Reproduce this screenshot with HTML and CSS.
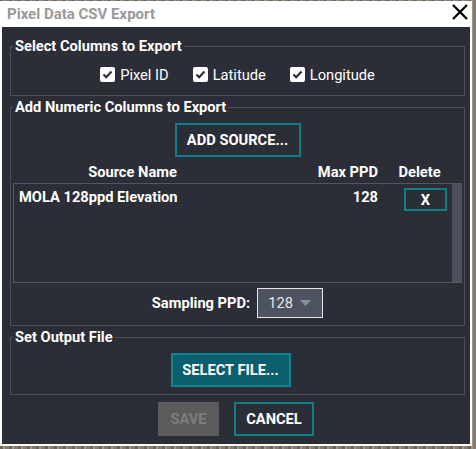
FILE: index.html
```html
<!DOCTYPE html>
<html lang="en">
<head>
    <meta charset="UTF-8" />
    <title>Pixel Data CSV Export</title>
    <link rel="stylesheet" href="styles.css">
</head>
<body>
    <div class="window">
        <div class="title-bar">
            <span class="title">Pixel Data CSV Export</span>
            <svg class="close" width="16" height="16" viewBox="0 0 16 16">
                <path d="M1 1L15 15M15 1L1 15" stroke="#000" stroke-width="2.2" fill="none" />
            </svg>
        </div>
        <div class="dialog">
            <fieldset class="group">
                <legend>Select Columns to Export</legend>
                <div class="checks">
                    <label class="check">
                        <span class="box"><svg width="15" height="15" viewBox="0 0 15 15"><path d="M3.5 7.5L6.2 10.2L11.5 4.5" stroke="#2c2e37" stroke-width="2.2" fill="none" /></svg></span>
                        Pixel ID
                    </label>
                    <label class="check">
                        <span class="box"><svg width="15" height="15" viewBox="0 0 15 15"><path d="M3.5 7.5L6.2 10.2L11.5 4.5" stroke="#2c2e37" stroke-width="2.2" fill="none" /></svg></span>
                        Latitude
                    </label>
                    <label class="check">
                        <span class="box"><svg width="15" height="15" viewBox="0 0 15 15"><path d="M3.5 7.5L6.2 10.2L11.5 4.5" stroke="#2c2e37" stroke-width="2.2" fill="none" /></svg></span>
                        Longitude
                    </label>
                </div>
            </fieldset>

            <fieldset class="group">
                <legend>Add Numeric Columns to Export</legend>
                <div class="center">
                    <button class="btn btn-outline add-btn">ADD SOURCE...</button>
                </div>
                <div class="cols head">
                    <span class="name">Source Name</span>
                    <span class="ppd">Max PPD</span>
                    <span class="del">Delete</span>
                </div>
                <div class="source-table">
                    <div class="rows">
                        <div class="cols row">
                            <span class="name">MOLA 128ppd Elevation</span>
                            <span class="ppd">128</span>
                            <span class="del"><button class="btn btn-outline x-btn">X</button></span>
                        </div>
                    </div>
                    <div class="scrollbar"></div>
                </div>
                <div class="sampling">
                    <span>Sampling PPD:</span>
                    <div class="select">
                        128
                        <svg width="11" height="6" viewBox="0 0 11 6"><path d="M0 0H11L5.5 6Z" fill="#8a8f9c" /></svg>
                    </div>
                </div>
            </fieldset>

            <fieldset class="group output">
                <legend>Set Output File</legend>
                <div class="center">
                    <button class="btn btn-fill file-btn">SELECT FILE...</button>
                </div>
            </fieldset>

            <div class="actions">
                <button class="btn btn-disabled save-btn">SAVE</button>
                <button class="btn btn-outline cancel-btn">CANCEL</button>
            </div>
        </div>
    </div>
</body>
</html>
```

FILE: styles.css
```css
body {
    margin: 0;
    width: 476px;
    height: 449px;
    overflow: hidden;
    background-color: #7f746a;
    background-image: repeating-linear-gradient(
        90deg,
        #6f655c 0 3px,
        #a39689 3px 5px,
        #857a70 5px 9px
    );
    font-family: Roboto, "Liberation Sans", sans-serif;
}
.window {
    width: 472px;
    height: 445px;
    margin-top: 1px;
    background-color: #fff;
    display: flex;
    flex-direction: column;
}
.title-bar {
    height: 26px;
    display: flex;
    justify-content: space-between;
    align-items: flex-start;
    padding: 0 4px 0 7px;
}
.title {
    padding-top: 4px;
    font-size: 15px;
    line-height: 18px;
    font-weight: bold;
    color: #999;
}
.close {
    margin-top: 3px;
}
.dialog {
    flex: 1;
    margin: 0 2px 2px 2px;
    background-color: #2c2e37;
    padding: 11px 5px 0 8px;
    display: flex;
    flex-direction: column;
    color: #fff;
    font-size: 14.667px;
    line-height: 16px;
}
.group {
    margin: 0 0 3px 0;
    padding: 0 1px;
    border: 1px solid #4b4d58;
    min-width: 0;
}
.group legend {
    margin-left: 1px;
    padding: 0 2px;
    font-weight: bold;
    line-height: 16px;
}
.checks {
    display: flex;
    justify-content: center;
    gap: 24px;
    padding: 10px 0;
}
.check {
    display: flex;
    align-items: center;
    gap: 5px;
    height: 21px;
}
.box {
    width: 15px;
    height: 15px;
    background-color: #fff;
    border-radius: 2px;
    display: flex;
}
.center {
    display: flex;
    justify-content: center;
    padding-top: 8px;
}
.btn {
    height: 34px;
    font-family: Roboto, "Liberation Sans", sans-serif;
    font-size: 14.667px;
    font-weight: bold;
    color: #fff;
    padding: 0;
    cursor: pointer;
}
.btn-outline {
    background-color: #2c2e37;
    border: 2px solid #0e7f8a;
}
.btn-fill {
    background-color: #0b5e6d;
    border: 2px solid #0f8493;
}
.btn-disabled {
    background-color: #5b5b5b;
    border: none;
    color: #7d7d7d;
}
.add-btn {
    width: 126px;
}
.file-btn {
    width: 120px;
    margin-right: 14px;
}
.cols {
    display: grid;
    grid-template-columns: 237px 127px 74px;
    font-weight: bold;
}
.head {
    margin-left: 2px;
    padding: 7px 0 3px;
}
.head .name {
    text-align: center;
}
.ppd {
    text-align: right;
}
.head .del {
    text-align: center;
    padding-left: 9px;
}
.source-table {
    height: 98px;
    margin: 0 1px;
    border: 1px solid #53555f;
    display: flex;
}
.rows {
    flex: 1;
}
.row {
    padding-top: 4px;
}
.row .name {
    padding: 1px 0 0 5px;
}
.row .ppd {
    padding-top: 1px;
}
.x-btn {
    width: 43px;
    height: 23px;
    margin-left: 26px;
}
.scrollbar {
    width: 11px;
    background-color: #4c505c;
}
.sampling {
    display: flex;
    justify-content: center;
    align-items: center;
    gap: 7px;
    margin-top: 5px;
    padding-bottom: 7px;
    font-weight: bold;
}
.select {
    width: 54px;
    height: 28px;
    padding-left: 10px;
    border: 1px solid #e6e6e6;
    background-color: #4e5361;
    color: #e6e6e6;
    font-weight: normal;
    display: flex;
    align-items: center;
    gap: 7px;
}
.output .center {
    padding-bottom: 7px;
}
.actions {
    display: flex;
    justify-content: center;
    gap: 15px;
    margin-top: 4px;
    padding-right: 3px;
}
.save-btn {
    width: 61px;
}
.cancel-btn {
    width: 80px;
}
```
